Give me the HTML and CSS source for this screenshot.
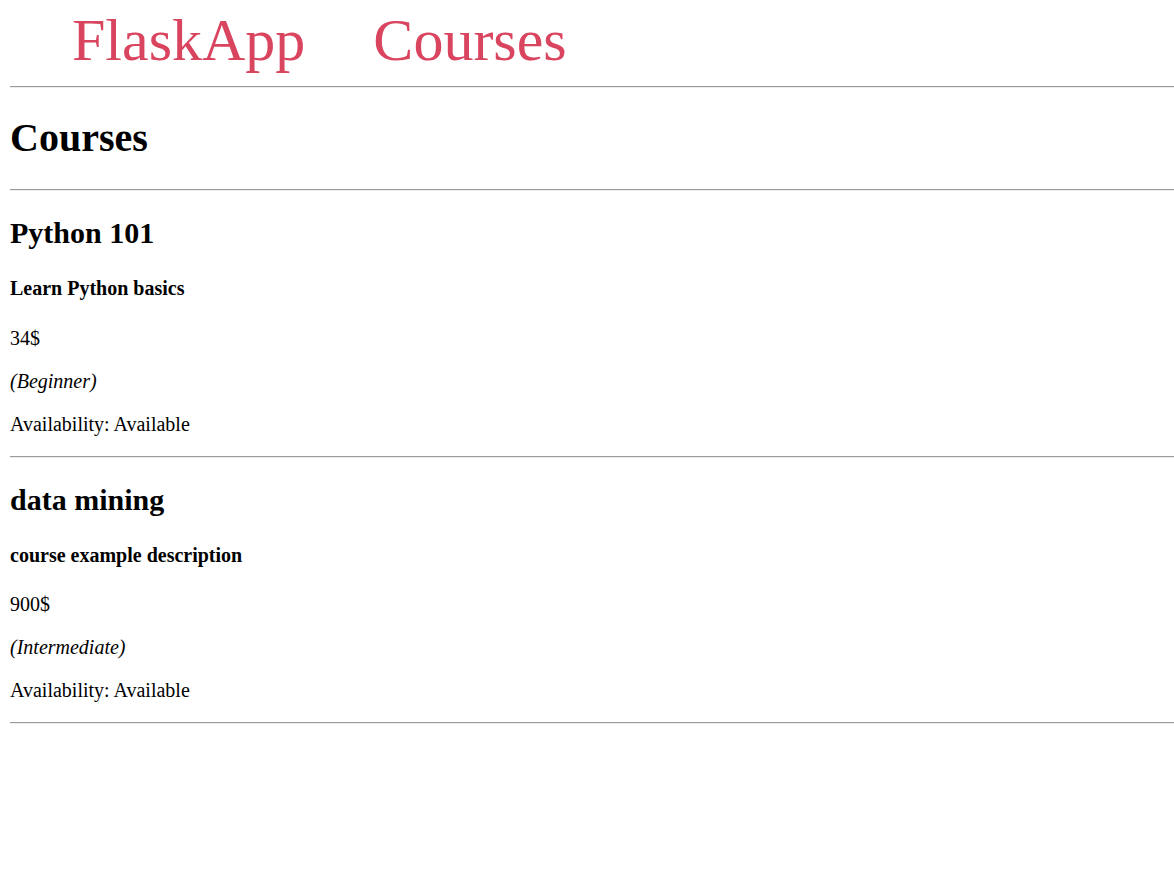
FILE: index.html
```html
<!DOCTYPE html>
<html>
<head>
<meta charset="utf-8">
<title>Courses</title>
<link rel="stylesheet" href="styles.css">
</head>
<body class="page">
<nav class="nav">
  <a class="nav-link" href="#">FlaskApp</a>
  <a class="nav-link" href="#">Courses</a>
</nav>
<hr class="rule">
<h1 class="title">Courses</h1>
<hr class="rule">
<section class="course">
  <h2 class="course-name">Python 101</h2>
  <h4 class="course-desc">Learn Python basics</h4>
  <p class="course-line">34$</p>
  <p class="course-line"><i>(Beginner)</i></p>
  <p class="course-line">Availability: Available</p>
</section>
<hr class="rule">
<section class="course">
  <h2 class="course-name">data mining</h2>
  <h4 class="course-desc">course example description</h4>
  <p class="course-line">900$</p>
  <p class="course-line"><i>(Intermediate)</i></p>
  <p class="course-line">Availability: Available</p>
</section>
<hr class="rule">
</body>
</html>
```
FILE: styles.css
```css
html {
  background: #fff;
}
.page {
  margin: 0 0 10px 10px;
  font-family: "Liberation Serif", "Times New Roman", serif;
  font-size: 20px;
  color: #000;
}
.nav {
  display: flex;
  gap: 68px;
  padding: 6px 0 0 62px;
  line-height: 69px;
  height: 70px;
}
.nav-link {
  font-size: 60px;
  color: #d9445f;
  text-decoration: none;
}
.rule {
  margin: 10px 0;
  border: none;
  border-top: 1px solid #9a9a9a;
  border-bottom: 1px solid #eeeeee;
  height: 0;
}
.title {
  font-size: 40px;
  font-weight: bold;
  margin: 27px 0 28px;
  line-height: 46px;
}
.course-name {
  font-size: 30px;
  font-weight: bold;
  margin: 25px 0;
  line-height: 34.5px;
}
.course-desc {
  font-size: 20px;
  font-weight: bold;
  margin: 26.6px 0;
  line-height: 23px;
}
.course-line {
  margin: 20px 0;
  line-height: 23px;
}
.course-line i {
  font-style: italic;
}
```
